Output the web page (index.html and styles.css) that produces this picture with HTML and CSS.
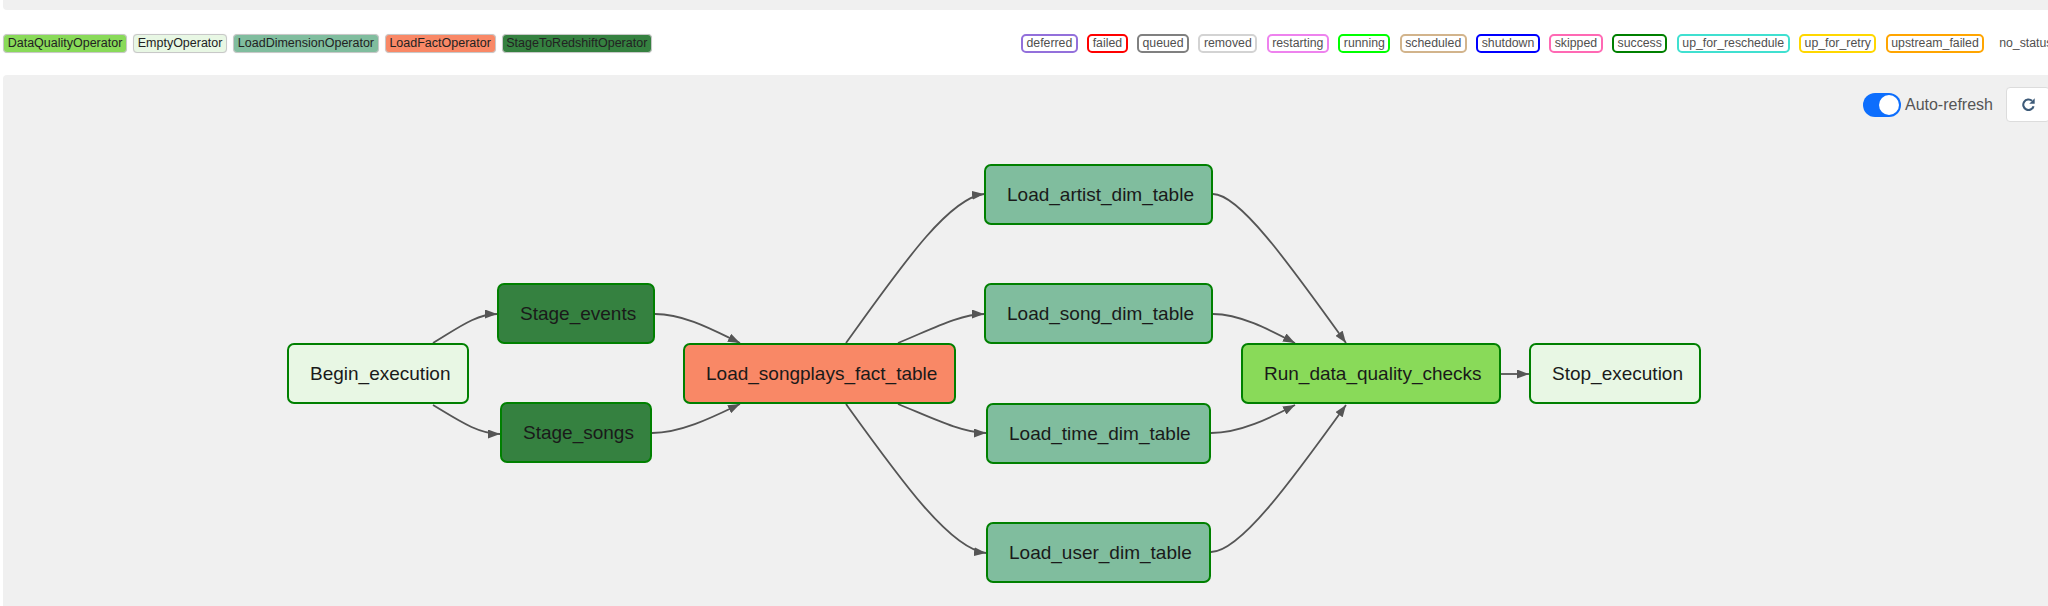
FILE: index.html
```html
<!DOCTYPE html>
<html>
<head>
    <title>DAG graph</title>
    <link rel="stylesheet" href="styles.css">
</head>
<body>
    <div class="topbar"></div>

    <div class="legend-row">
        <div class="op-legend">
            <span class="op-pill dq">DataQualityOperator</span>
            <span class="op-pill empty">EmptyOperator</span>
            <span class="op-pill dim">LoadDimensionOperator</span>
            <span class="op-pill fact">LoadFactOperator</span>
            <span class="op-pill stage">StageToRedshiftOperator</span>
        </div>
        <div class="state-legend">
            <span class="state deferred">deferred</span>
            <span class="state failed">failed</span>
            <span class="state queued">queued</span>
            <span class="state removed">removed</span>
            <span class="state restarting">restarting</span>
            <span class="state running">running</span>
            <span class="state scheduled">scheduled</span>
            <span class="state shutdown">shutdown</span>
            <span class="state skipped">skipped</span>
            <span class="state success">success</span>
            <span class="state up_for_reschedule">up_for_reschedule</span>
            <span class="state up_for_retry">up_for_retry</span>
            <span class="state upstream_failed">upstream_failed</span>
            <span class="state no_status">no_status</span>
        </div>
    </div>

    <div class="graph-panel">
        <div class="toolbar">
            <span class="switch"><span class="knob"></span></span>
            <span class="switch-label">Auto-refresh</span>
            <button class="refresh-btn" title="Refresh">
                <svg width="15" height="15" viewBox="0 0 16 16">
                    <path d="M13.4,9.8 A5.6,5.6 0 1 1 11.8,4.1" fill="none" stroke="#3d5a78" stroke-width="2.2"/>
                    <polygon points="14.6,1.4 14.6,7.2 8.8,7.2" fill="#3d5a78"/>
                </svg>
            </button>
        </div>
        <div class="graph" id="graph">
            <svg class="edges" id="edges" width="1800" height="490">
                <defs>
                    <marker id="arrow" viewBox="0 0 12 9" refX="12" refY="4.5" markerWidth="12" markerHeight="9" markerUnits="userSpaceOnUse" orient="auto">
                        <path d="M0,0 L12,4.5 L0,9 z" fill="#555"/>
                    </marker>
                </defs>
                <g id="edge-group" transform="translate(-3 -122)"></g>
            </svg>
        </div>
    </div>

    <script>
        // tareas del DAG (x, y en coordenadas del grafo)
        const nodes = [
            { label: 'Begin_execution', type: 'empty', x: 284, y: 221, w: 182 },
            { label: 'Stage_events', type: 'stage', x: 494, y: 161, w: 158 },
            { label: 'Stage_songs', type: 'stage', x: 497, y: 280, w: 152 },
            { label: 'Load_songplays_fact_table', type: 'fact', x: 680, y: 221, w: 273 },
            { label: 'Load_artist_dim_table', type: 'dim', x: 981, y: 42, w: 229 },
            { label: 'Load_song_dim_table', type: 'dim', x: 981, y: 161, w: 229 },
            { label: 'Load_time_dim_table', type: 'dim', x: 983, y: 281, w: 225 },
            { label: 'Load_user_dim_table', type: 'dim', x: 983, y: 400, w: 225 },
            { label: 'Run_data_quality_checks', type: 'dq', x: 1238, y: 221, w: 260 },
            { label: 'Stop_execution', type: 'empty', x: 1526, y: 221, w: 172 }
        ];

        // aristas (coordenadas de pagina)
        const edges = [
            'M433,343 C458,328 476,314 497,314',
            'M433,405 C458,420 478,434 500,434',
            'M655,314 C685,314 715,331 740,343',
            'M652,433 C682,433 715,416 740,404',
            'M846,343 C900,268 948,198 984,194',
            'M898,343 C930,330 960,314 984,314',
            'M898,404 C930,417 962,433 986,433',
            'M846,404 C900,479 950,549 986,553',
            'M1213,194 C1240,194 1292,268 1346,343',
            'M1213,314 C1240,314 1270,330 1295,343',
            'M1211,433 C1240,433 1270,418 1295,405',
            'M1211,552 C1240,552 1292,480 1346,405',
            'M1501,374 L1529,374'
        ];

        function render() {
            const graph = document.getElementById('graph');
            const group = document.getElementById('edge-group');

            edges.forEach(d => {
                const path = document.createElementNS('http://www.w3.org/2000/svg', 'path');
                path.setAttribute('d', d);
                path.setAttribute('class', 'edge');
                path.setAttribute('marker-end', 'url(#arrow)');
                group.appendChild(path);
            });

            nodes.forEach(n => {
                const el = document.createElement('div');
                el.className = `node ${n.type}`;
                el.style.left = n.x + 'px';
                el.style.top = n.y + 'px';
                el.style.width = n.w + 'px';
                el.textContent = n.label;
                graph.appendChild(el);
            });
        }

        render();
    </script>
</body>
</html>
```

FILE: styles.css
```css
html, body {
    overflow: hidden;
}
body {
    margin: 0;
    padding: 0 3px;
    width: 2055px;
    font-family: 'Liberation Sans', Arial, sans-serif;
    background: #fff;
}
.topbar {
    height: 10px;
    background: #f0f0f0;
    border-radius: 0 0 4px 4px;
}
.legend-row {
    display: flex;
    justify-content: space-between;
    align-items: center;
    height: 65px;
    padding-top: 2px;
    box-sizing: border-box;
}
.op-legend {
    display: flex;
    gap: 6px;
}
.op-pill {
    font-size: 12.5px;
    line-height: 17px;
    padding: 0 3.7px;
    border: 1px solid #c8c8c8;
    border-radius: 4px;
    color: #222;
    box-shadow: 0 0 1px rgba(0,0,0,0.15);
}
.dq { background: #89da59; }
.empty { background: #e8f7e4; }
.dim { background: #80bd9e; }
.fact { background: #f98866; }
.stage { background: #358140; }
.state-legend {
    display: flex;
    gap: 9.4px;
}
.state {
    font-size: 12.3px;
    line-height: 15px;
    padding: 0 3.5px;
    border: 2px solid #fff;
    border-radius: 5px;
    color: #51504f;
}
.deferred { border-color: mediumpurple; }
.failed { border-color: red; }
.queued { border-color: gray; }
.removed { border-color: lightgrey; }
.restarting { border-color: violet; }
.running { border-color: lime; }
.scheduled { border-color: tan; }
.shutdown { border-color: blue; }
.skipped { border-color: hotpink; }
.success { border-color: green; }
.up_for_reschedule { border-color: turquoise; }
.up_for_retry { border-color: gold; }
.upstream_failed { border-color: orange; }
.no_status { border-color: #fff; }
.graph-panel {
    background: #f0f0f0;
    border-radius: 4px;
    padding: 12px 8px 0 0;
}
.toolbar {
    display: flex;
    justify-content: flex-end;
    align-items: center;
    height: 35px;
}
.switch {
    position: relative;
    width: 38px;
    height: 24px;
    border-radius: 12px;
    background: #0d6efd;
}
.knob {
    position: absolute;
    top: 2px;
    right: 2px;
    width: 20px;
    height: 20px;
    border-radius: 50%;
    background: #fff;
}
.switch-label {
    margin: 0 13px 0 4px;
    font-size: 16px;
    color: #555;
}
.refresh-btn {
    width: 44px;
    height: 35px;
    display: flex;
    justify-content: center;
    align-items: center;
    background: #fff;
    border: 1px solid #dcdcdc;
    border-radius: 4px;
    padding: 0;
}
.graph {
    position: relative;
    height: 490px;
}
.edges {
    position: absolute;
    left: 0;
    top: 0;
    overflow: visible;
}
.edge {
    fill: none;
    stroke: #555;
    stroke-width: 1.8px;
}
.node {
    position: absolute;
    height: 61px;
    box-sizing: border-box;
    display: flex;
    align-items: center;
    padding-left: 21px;
    border: 2.5px solid #008000;
    border-radius: 7px;
    font-size: 19px;
    color: #1a1a1a;
    white-space: nowrap;
}
```
